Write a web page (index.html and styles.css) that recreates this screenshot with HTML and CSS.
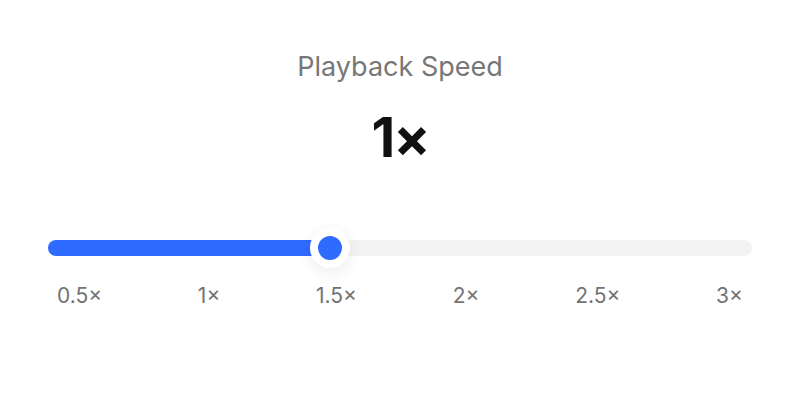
FILE: index.html
```html
<!DOCTYPE html>
<html lang="en">
<head>
  <meta charset="UTF-8" />
  <title>Playback Speed</title>
  <link rel="stylesheet" href="styles.css">
</head>
<body>
  <div class="panel">
    <h2 class="label">Playback Speed</h2>
    <div class="value">1&times;</div>

    <div class="slider">
      <div class="track">
        <div class="fill" style="width: 40%"></div>
        <div class="thumb" style="left: 40%"></div>
      </div>
      <div class="ticks">
        <span>0.5&times;</span>
        <span>1&times;</span>
        <span>1.5&times;</span>
        <span>2&times;</span>
        <span>2.5&times;</span>
        <span>3&times;</span>
      </div>
    </div>
  </div>
</body>
</html>
```

FILE: styles.css
```css
body {
  margin: 0;
  background: #fff;
  font-family: Inter, "Noto Sans", sans-serif;
}
.panel {
  display: flex;
  flex-direction: column;
  align-items: center;
  padding: 51px 48px 0;
}
.label {
  margin: 0;
  font-size: 27px;
  line-height: 32px;
  font-weight: 400;
  color: #777;
}
.value {
  margin-top: 22px;
  font-size: 55px;
  line-height: 64px;
  font-weight: 700;
  color: #111;
  letter-spacing: -2px;
}
.slider {
  align-self: stretch;
  margin-top: 71px;
}
.track {
  position: relative;
  height: 16px;
  border-radius: 8px;
  background: #f3f3f3;
}
.fill {
  height: 100%;
  border-radius: 8px;
  background: #2f6bff;
}
/* thumb sits on top of the track */
.thumb {
  position: absolute;
  top: 50%;
  width: 24px;
  height: 24px;
  border: 8px solid #fff;
  border-radius: 50%;
  background: #2f6bff;
  transform: translate(-50%, -50%);
  box-shadow: 0 4px 16px rgba(0, 0, 0, 0.08);
}
.ticks {
  display: flex;
  justify-content: space-between;
  padding: 0 9px;
  margin-top: 28px;
  font-size: 21px;
  line-height: 24px;
  color: #737373;
}
```
